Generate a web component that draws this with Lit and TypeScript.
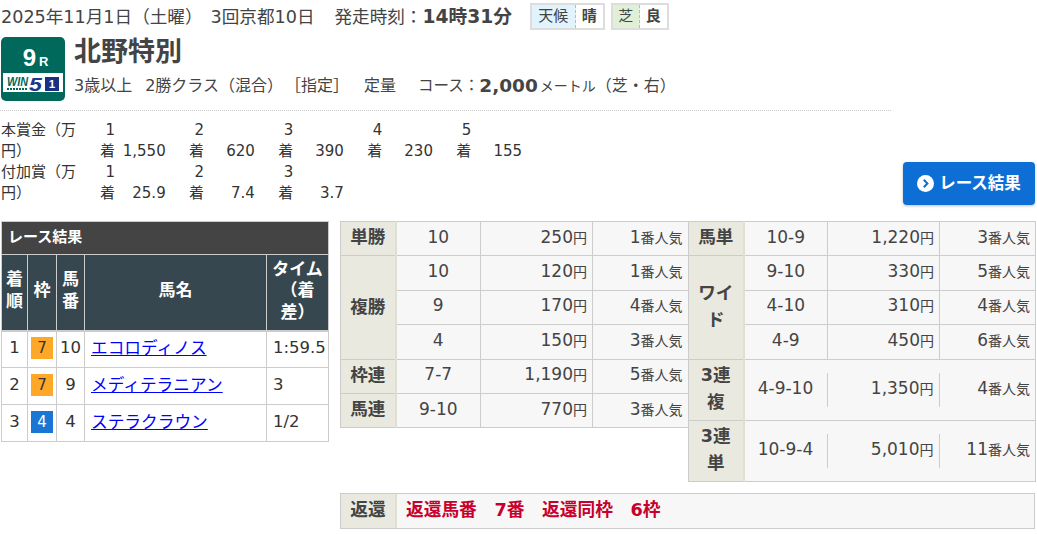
import { LitElement, html, css } from "lit";
import { customElement } from "lit/decorators.js";

type Row = { label?: string; span?: number; nums: string; yen: string; pop: string };

const leftRows: Row[][] = [
  [{ label: "単勝", nums: "10", yen: "250", pop: "1" }],
  [
    { label: "複勝", span: 3, nums: "10", yen: "120", pop: "1" },
    { nums: "9", yen: "170", pop: "4" },
    { nums: "4", yen: "150", pop: "3" },
  ],
  [{ label: "枠連", nums: "7-7", yen: "1,190", pop: "5" }],
  [{ label: "馬連", nums: "9-10", yen: "770", pop: "3" }],
];
const rightRows: Row[][] = [
  [{ label: "馬単", nums: "10-9", yen: "1,220", pop: "3" }],
  [
    { label: "ワイ<br>ド", span: 3, nums: "9-10", yen: "330", pop: "5" },
    { nums: "4-10", yen: "310", pop: "4" },
    { nums: "4-9", yen: "450", pop: "6" },
  ],
];
const prizes = [
  { label: "本賞金（万", vals: ["1,550", "620", "390", "230", "155"] },
  { label: "付加賞（万", vals: ["25.9", "7.4", "3.7"] },
];
const results = [
  { rank: 1, waku: 7, num: 10, name: "エコロディノス", time: "1:59.5", blue: false },
  { rank: 2, waku: 7, num: 9, name: "メディテラニアン", time: "3", blue: false },
  { rank: 3, waku: 4, num: 4, name: "ステラクラウン", time: "1/2", blue: true },
];

@customElement("app-root")
export class AppRoot extends LitElement {
  static styles = css`
    :host {
      display: block;
      width: 1037px;
      height: 534px;
      overflow: hidden;
      background: #fff;
      color: #333;
      font-family: "DejaVu Sans", "Noto Sans CJK JP", sans-serif;
      font-size: 16px;
      line-height: 20px;
    }
    * { box-sizing: border-box; }
    .head { width: 891px; height: 111px; padding: 3px 0 0 1px; border-bottom: 1px dotted #ccc; }
    .line1 { display: flex; align-items: center; height: 27px; white-space: pre; color: #444; font-size: 17.6px; }
    .line1 .l2 { margin-left: 8px; }
    .line1 .l3 { margin-left: 20px; }
    .line1 b.time { font-size: 18.7px; color: #444; }
    .tag { display: flex; height: 27px; border: 2px solid #ddd; margin-left: 6px; font-size: 15px; line-height: 23px; text-align: center; }
    .tag.first { margin-left: 18px; }
    .tag span { background: #e1f3fc; border-right: 1px dashed #bbb; width: 44px; }
    .tag span.turf { background: #dff0d6; width: 27px; }
    .tag b { width: 27px; background: #fff; }
    .main { display: flex; margin-top: 7px; gap: 9px; }
    .icon { width: 64px; height: 64px; border-radius: 5px; background: #00695c; display: flex; flex-direction: column; align-items: center; color: #fff; padding-top: 7px; }
    .icon .r { font-family: "Liberation Sans", sans-serif; font-weight: 700; font-size: 24px; line-height: 28px; height: 29px; padding-left: 5px; }
    .icon .r small { font-size: 13px; margin-left: 3px; }
    .w5 { width: 60px; height: 19px; background: #fff; }
    .w5 svg { display: block; overflow: visible; }
    .titles { display: flex; flex-direction: column; }
    h1 { margin: 0; font-size: 27px; line-height: 30px; font-weight: 700; color: #444; }
    .sub { margin-top: 6px; height: 26px; display: flex; align-items: center; white-space: pre; font-size: 16px; color: #444; }
    .sub .g1 { margin-left: 13px; }
    .sub .g2 { margin-left: 2px; }
    .sub .g3 { margin-left: 15px; }
    .sub .g4 { margin-left: 22px; }
    .sub .c { font-size: 15.5px; }
    .sub b { font-size: 18.5px; }
    .sub .m { margin-left: 2px; font-size: 14px; }
    .mid { display: flex; justify-content: space-between; padding-right: 2px; }
    .prize { padding-top: 9px; font-size: 15px; line-height: 21px; color: #333; }
    .prow { display: grid; grid-template-columns: 76.6px repeat(5, 89.1px); width: 530px; }
    .plabel { padding-left: 1px; }
    .pcell { display: grid; grid-template-columns: 39px 1fr; }
    .pv { text-align: right; white-space: nowrap; }
    .pn { text-align: right; padding-right: 0.6px; }
    .btn { margin-top: 51px; width: 132px; height: 43px; border-radius: 4px; background: #0d6fd6; color: #fff; font-weight: 700; font-size: 16.5px; display: flex; align-items: center; justify-content: center; gap: 5px; box-shadow: 0 1px 3px rgba(0,0,0,.25); }
    .btn svg { display: block; }
    .bottom { display: flex; align-items: flex-start; margin-top: 16px; padding-left: 1px; }
    .res { width: 327px; border-collapse: collapse; table-layout: fixed; flex: none; }
    .res caption { height: 33px; background: #444; color: #fff; font-size: 15px; font-weight: 700; text-align: left; padding-left: 6px; line-height: 31px; border: 1px solid #ccc; border-bottom: 0; }
    .res th, .res td { border: 1px solid #ccc; padding: 0; }
    .res th { background: #37474f; color: #fff; font-size: 17px; line-height: 21.5px; height: 76px; border-bottom-width: 2px; padding-bottom: 3px; }
    .res td { height: 37px; text-align: center; font-size: 16.5px; padding-bottom: 2px; }
    .res td.n, .res td.t { text-align: left; padding-left: 6px; white-space: nowrap; }
    .res a { color: #00f; text-decoration: underline; font-size: 16.7px; }
    .waku { display: inline-block; width: 22px; height: 22px; line-height: 22px; background: #ffa726; font-size: 15px; vertical-align: middle; }
    .waku.blue { background: #1976d2; color: #fff; }
    .pay { display: flex; flex-direction: column; margin-left: 11px; }
    .pays { display: flex; align-items: flex-start; }
    .pt { border-collapse: collapse; table-layout: fixed; width: 348px; font-size: 17px; color: #444; flex: none; }
    .pt.r { margin-left: -1px; width: 347px; }
    .pt th { width: 55px; background: #e9e9df; border: 1px solid #ccc; border-right: 2px solid #e0e0d2; font-size: 17.6px; color: #444; line-height: 27px; padding: 0 0 2px; }
    .pt th.wide { padding-bottom: 0; }
    .pt td { background: #f7f7f7; border: 1px solid #ccc; padding: 0 0 4px; height: 34.4px; white-space: nowrap; }
    .pt td.a { width: 85px; text-align: center; }
    .pt.r td.a { width: 84px; }
    .pt td.b { width: 112px; text-align: right; padding-right: 5px; }
    .pt td.c { width: 96px; text-align: right; padding-right: 5.5px; }
    .pt.r td.c { padding-right: 5px; }
    .pt tr.d td { border-top: 1px dashed #ccc; }
    .pt small { font-size: 14px; line-height: 1; }
    .pt tr.tall td { height: 61px; border-left: 0; border-right: 0; padding-bottom: 0; }
    .pt tr.tall td:last-child { border-right: 1px solid #ccc; }
    .pt tr.tall td.b, .pt tr.tall td.c { padding-right: 0; }
    .in { display: block; height: 34px; line-height: 30px; padding-right: 5px; }
    .in.s { border-right: 1px solid #ccc; }
    .in.ctr { padding-right: 0; }
    .ret { display: flex; margin-top: 11px; height: 36px; width: 695px; border: 1px solid #ccc; background: #f7f7f7; font-size: 17.7px; }
    .ret .h { width: 56px; background: #e9e9df; border-right: 2px solid #e0e0d2; text-align: center; font-weight: 700; line-height: 33px; color: #444; }
    .ret .v { padding-left: 9px; color: #c8002d; font-weight: 700; line-height: 33px; white-space: pre; }
  `;

  private payRow(r: Row, dashed: boolean) {
    return html`<tr class=${dashed ? "d" : ""}>
      ${r.label
        ? html`<th class=${r.span ? "wide" : ""} rowspan=${r.span ?? 1} .innerHTML=${r.label}></th>`
        : ""}
      <td class="a">${r.nums}</td>
      <td class="b">${r.yen}<small>円</small></td>
      <td class="c">${r.pop}<small>番人気</small></td>
    </tr>`;
  }

  private payTable(groups: Row[][]) {
    return groups.map((g) => g.map((r, i) => this.payRow(r, i > 0)));
  }

  private tall(l1: string, l2: string, nums: string, yen: string, pop: string) {
    return html`<tr class="tall">
      <th>${l1}<br />${l2}</th>
      <td class="a"><span class="in s ctr">${nums}</span></td>
      <td class="b"><span class="in s">${yen}<small>円</small></span></td>
      <td class="c"><span class="in">${pop}<small>番人気</small></span></td>
    </tr>`;
  }

  render() {
    return html`
      <div class="head">
        <div class="line1">
          <span>2025年11月1日（土曜）</span><span class="l2">3回京都10日</span><span class="l3">発走時刻：</span><b class="time">14時31分</b>
          <div class="tag first"><span>天候</span><b>晴</b></div>
          <div class="tag"><span class="turf">芝</span><b>良</b></div>
        </div>
        <div class="main">
          <div class="icon">
            <div class="r">9<small>R</small></div>
            <div class="w5">
              <svg width="60" height="19" viewBox="0 0 60 19">
                <text x="4" y="12.5" textLength="21" lengthAdjust="spacingAndGlyphs" font-family="Liberation Sans" font-size="12" font-weight="700" font-style="italic" fill="#00695c">WIN</text>
                <text transform="translate(26 17.5) scale(1.25 1)" font-family="Liberation Sans" font-size="18.5" font-weight="700" font-style="italic" fill="#1a3a8a">5</text>
                <path d="M4 16h21" stroke="#00695c" stroke-width="2" stroke-dasharray="2 1" />
                <rect x="42" y="4" width="14" height="14" fill="#1a3080" />
                <text x="49" y="15" text-anchor="middle" font-family="Liberation Sans" font-size="11.5" font-weight="700" fill="#fff">1</text>
              </svg>
            </div>
          </div>
          <div class="titles">
            <h1>北野特別</h1>
            <div class="sub"><span>3歳以上</span><span class="g1">2勝クラス（混合）</span><span class="g2">［指定］</span><span class="g3">定量</span><span class="c g4">コース：</span><b>2,000</b><span class="m">メートル</span><span>（芝・右）</span></div>
          </div>
        </div>
      </div>
      <div class="mid">
        <div class="prize">
          ${prizes.map(
            (p) => html`<div class="prow">
              <div class="plabel">${p.label}<br />円）</div>
              ${p.vals.map(
                (v, i) => html`<div class="pcell">
                  <div class="pn">${i + 1}<br />着</div>
                  <div class="pv"><br />${v}</div>
                </div>`
              )}
            </div>`
          )}
        </div>
        <div class="btn">
          <svg width="17" height="17" viewBox="0 0 17 17"><circle cx="8.5" cy="8.5" r="8.5" fill="#fff" /><path d="M6.8 4.8l3.6 3.7-3.6 3.7" fill="none" stroke="#0d6fd6" stroke-width="2" /></svg>
          レース結果
        </div>
      </div>
      <div class="bottom">
        <table class="res">
          <caption>レース結果</caption>
          <colgroup><col style="width:26px" /><col style="width:29px" /><col style="width:28px" /><col style="width:182px" /><col style="width:62px" /></colgroup>
          <tr><th>着<br />順</th><th>枠</th><th>馬<br />番</th><th>馬名</th><th>タイム<br />（着<br />差）</th></tr>
          ${results.map(
            (r) => html`<tr>
              <td>${r.rank}</td>
              <td><span class="waku ${r.blue ? "blue" : ""}">${r.waku}</span></td>
              <td>${r.num}</td>
              <td class="n"><a href="#">${r.name}</a></td>
              <td class="t">${r.time}</td>
            </tr>`
          )}
        </table>
        <div class="pay">
          <div class="pays">
            <table class="pt">${this.payTable(leftRows)}</table>
            <table class="pt r">
              ${this.payTable(rightRows)}
              ${this.tall("3連", "複", "4-9-10", "1,350", "4")}
              ${this.tall("3連", "単", "10-9-4", "5,010", "11")}
            </table>
          </div>
          <div class="ret">
            <div class="h">返還</div>
            <div class="v">返還馬番　7番　返還同枠　6枠</div>
          </div>
        </div>
      </div>
    `;
  }
}
